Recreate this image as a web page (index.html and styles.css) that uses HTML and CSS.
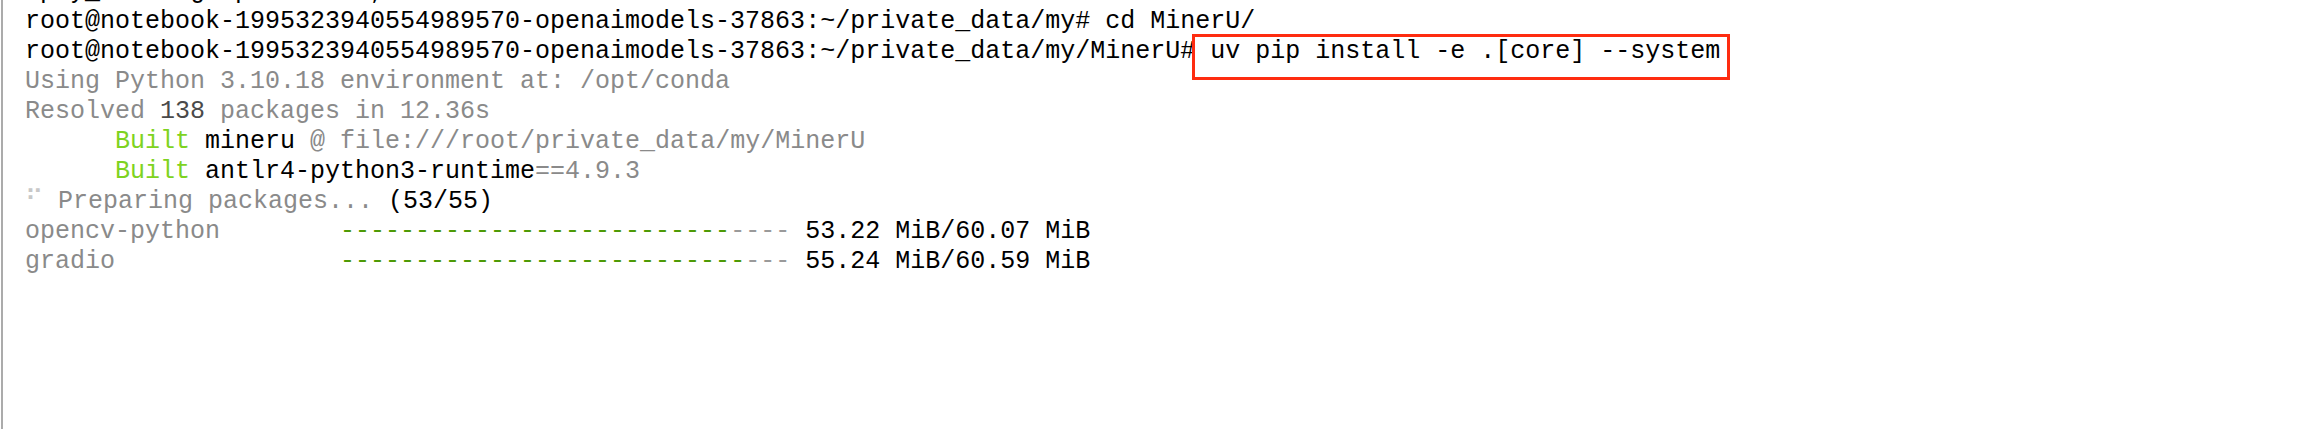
FILE: index.html
```html
<!DOCTYPE html>
<html>
<head>
<meta charset="utf-8">
<link rel="stylesheet" href="styles.css">
</head>
<body>
<div class="term">
<div class="line">op y_ config  p        ,</div>
<div class="line">root@notebook-1995323940554989570-openaimodels-37863:~/private_data/my# cd MinerU/</div>
<div class="line">root@notebook-1995323940554989570-openaimodels-37863:~/private_data/my/MinerU#<span class="mark"> uv pip install -e .[core] --system</span></div>
<div class="line dim">Using Python 3.10.18 environment at: /opt/conda</div>
<div class="line dim">Resolved <span class="bold">138</span> packages in 12.36s</div>
<div class="line">      <span class="green">Built</span> mineru <span class="dim">@ file:///root/private_data/my/MinerU</span></div>
<div class="line">      <span class="green">Built</span> antlr4-python3-runtime<span class="dim">==4.9.3</span></div>
<div class="line"><span class="spin">⠋</span> <span class="dim">Preparing packages...</span> (53/55)</div>
<div class="line"><span class="dim">opencv-python        </span><span class="bar-done">--------------------------</span><span class="bar-todo">----</span> 53.22 MiB/60.07 MiB</div>
<div class="line"><span class="dim">gradio               </span><span class="bar-done">---------------------------</span><span class="bar-todo">---</span> 55.24 MiB/60.59 MiB</div>
</div>
</body>
</html>
```
FILE: styles.css
```css
html, body {
  margin: 0;
  padding: 0;
  background: #ffffff;
  overflow: hidden;
}
body {
  width: 2320px;
  height: 429px;
}
.term {
  display: flow-root;
  margin-left: 1px;
  border-left: 2px solid #ababab;
  height: 429px;
  box-sizing: border-box;
  padding-left: 22px;
  font-family: "Liberation Mono", "DejaVu Sans Mono", monospace;
  font-size: 25px;
  line-height: 30px;
  color: #000000;
}
.term > .line:first-child {
  margin-top: -23px;
}
.line {
  white-space: pre;
  height: 30px;
}
.dim {
  color: #8a8a8a;
}
.bold {
  color: #4a4a4a;
}
.green {
  color: #7ed321;
}
.spin {
  color: #c8c8c8;
}
.bar-done {
  color: #4e9a06;
}
.bar-todo {
  color: #9a9a9a;
}
.mark {
  position: relative;
}
.mark::after {
  content: "";
  position: absolute;
  left: -3px;
  right: -10px;
  top: -3px;
  height: 46px;
  box-sizing: border-box;
  border: 3px solid #fe2c10;
}
```
